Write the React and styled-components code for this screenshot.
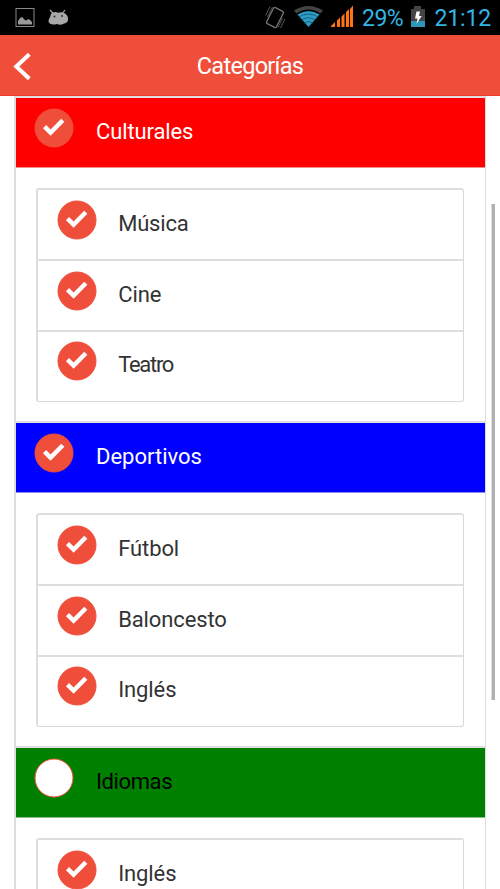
import React, { useState } from "react";
import styled, { createGlobalStyle } from "styled-components";

const GlobalStyle = createGlobalStyle`
  * {
    box-sizing: border-box;
  }

  body {
    margin: 0;
    background: #fff;
    font-family: Roboto, "Liberation Sans", sans-serif;
    overflow: hidden;
  }
`;

const Screen = styled.div`
  display: flex;
  flex-direction: column;
  width: 500px;
  height: 889px;
  overflow: hidden;
  background: #fff;
`;

const StatusBar = styled.div`
  display: flex;
  flex: none;
  justify-content: space-between;
  height: 35px;
  background: #000;
`;

const StatusGroup = styled.div`
  display: flex;
  align-items: flex-start;
`;

const StatusIcon = styled.svg`
  display: block;
  flex: none;
  height: 35px;
`;

const StatusText = styled.span`
  width: ${(props) => props.$width}px;
  color: #33b5e5;
  font-size: 23px;
  line-height: 37px;
  letter-spacing: ${(props) => props.$spacing}px;
  white-space: nowrap;
`;

const Header = styled.header`
  display: grid;
  flex: none;
  grid-template-columns: 60px 1fr 60px;
  align-items: center;
  height: 61px;
  background: #ef4e3a;
  border-bottom: 1px solid #ef3c26;
`;

const BackButton = styled.button`
  width: 60px;
  height: 60px;
  padding: 0;
  border: none;
  background: none;
  cursor: pointer;
`;

const Title = styled.h1`
  margin: 0;
  color: #fff;
  font-size: 23.5px;
  font-weight: 400;
  line-height: 60px;
  letter-spacing: -0.7px;
  text-align: center;
  padding-top: 1px;
`;

const Content = styled.main`
  display: flex;
  flex: 1;
  min-height: 0;
  justify-content: space-between;
  overflow: hidden;
`;

const Categories = styled.div`
  flex: none;
  width: 472px;
  margin-left: 14px;
`;

const Category = styled.section`
  height: 325px;
  border-left: 2px solid #dedede;
  border-right: 1px solid #dcdcdc;
`;

const CategoryHeader = styled.div`
  display: flex;
  height: 72px;
  padding: 10px 0 0 18px;
  border-top: 2px solid #e0dede;
  border-bottom: 1px solid ${(props) => props.$edge};
  background: ${(props) => props.$color};
  background-clip: padding-box;
  color: ${(props) => props.$text};
`;

const List = styled.div`
  height: 214px;
  margin: 20px 21px 19px 20px;
  border: 1px solid #d9d9d9;
  border-top: 2px solid #dedede;
  border-left: 2px solid #dedede;
  border-radius: 3px;
`;

const Item = styled.div`
  display: flex;
  height: ${(props) => props.$height}px;
  padding: 10px 0 0 18.6px;
  color: #333;

  & + & {
    padding-top: ${(props) => 12 - props.$line}px;
    border-top: ${(props) => props.$line}px solid #dedede;
  }

  & + & + & {
    padding-top: 9px;
  }
`;

const Label = styled.span`
  margin-left: 22px;
  font-size: 22px;
  line-height: 26px;
  padding-top: 11px;
  letter-spacing: ${(props) => props.$spacing || 0}px;

  ${Item} & {
    margin-left: 21.6px;
  }
`;

const CheckButton = styled.button`
  flex: none;
  width: 40px;
  height: 40px;
  padding: 0;
  border: none;
  background: none;
  cursor: pointer;
`;

const ScrollBar = styled.div`
  width: 4px;
  height: 496px;
  margin: 108px 5px 0 0;
  border-left: 1px solid #dcdcdc;
  background: #b0b0b0;
`;

const categories = [
  {
    name: "Culturales",
    spacing: -0.12,
    color: "#ff0000",
    edge: "#ef8b8b",
    checked: true,
    items: [
      { name: "Música", spacing: -0.2 },
      { name: "Cine", spacing: -0.1 },
      { name: "Teatro", spacing: -1.3 },
    ],
  },
  {
    name: "Deportivos",
    spacing: 0,
    color: "#0000ff",
    edge: "#8b8bef",
    checked: true,
    items: [
      { name: "Fútbol", spacing: -0.1 },
      { name: "Baloncesto", spacing: -0.12 },
      { name: "Inglés", spacing: -0.1 },
    ],
  },
  {
    name: "Idiomas",
    spacing: -0.4,
    color: "#008000",
    edge: "#8bb98b",
    checked: false,
    items: [{ name: "Inglés", spacing: -0.1 }],
  },
];

// each row has its own height and separator thickness
const rows = [
  { height: 69, line: 0 },
  { height: 71, line: 1 },
  { height: 71, line: 2 },
];

function Check({ initial, label }) {
  const [checked, setChecked] = useState(initial);

  return (
    <CheckButton
      type="button"
      aria-label={label}
      aria-pressed={checked}
      onClick={() => setChecked(!checked)}
    >
      <svg width="40" height="40" viewBox="0 0 40 40">
        <circle
          cx="20"
          cy="20"
          r="19"
          fill={checked ? "#ef4e3a" : "#fff"}
          stroke="#ef4e3a"
        />
        {checked && (
          <path
            d="M10.5 18.6 L16.6 24.6 L28.8 12.2"
            fill="none"
            stroke="#fff"
            strokeWidth="4.4"
          />
        )}
      </svg>
    </CheckButton>
  );
}

function StatusIcons() {
  return (
    <StatusBar>
      <StatusGroup>
        <StatusIcon width="80" viewBox="0 0 80 35">
          <rect x="16" y="8.5" width="18" height="18" fill="none" stroke="#8a8a8a" />
          <path
            d="M18 24.5V21l1.5-2 1-1.5 2-.2 1.5 2 2 1.3 2.5-1.5 2 1.2 1.5 2v2.2z"
            fill="#999"
          />
          <path
            d="M50 10l2.8 3M65 10l-2.3 3"
            stroke="#a8a8a8"
            strokeWidth="1.2"
          />
          <path
            d="M50.8 14.5c1.5-3 5.2-3 7.3-1.7 3-1.3 7-.4 8.5 2.3 3 3.5 1.5 8.4-3 8.6-2.5 1.5-5 1-6.7.2-3 1.1-7 1-8.3-1.8-.5-2.5 1.2-3.6 1.5-5z"
            fill="#a8a8a8"
          />
          <circle cx="54.5" cy="16.5" r=".9" fill="#222" />
          <circle cx="62" cy="16" r=".9" fill="#222" />
        </StatusIcon>
      </StatusGroup>
      <StatusGroup>
        <StatusIcon width="107" viewBox="255 0 107 35">
          <rect
            x="269.5"
            y="8.5"
            width="11"
            height="18"
            rx="1.5"
            fill="none"
            stroke="#777"
            strokeWidth="1.3"
            transform="rotate(27 275 17.5)"
          />
          <path
            d="M270 6.5l-4.5 9M272.5 7l-5 10M282.5 18l-4.5 9.5M285 19l-4.5 9"
            stroke="#555"
            strokeWidth="1"
          />
          <path
            d="M294 10.5Q308.5 1.5 323 10.5L320.5 13.5Q308.5 5.5 296.5 13.5Z"
            fill="#444"
          />
          <path d="M297.5 14.5Q308.5 7.5 319.5 14.5L308.5 27Z" fill="#2c9cc6" />
          <path
            d="M299 17Q308.5 11 318 17M301.5 20Q308.5 15.5 315.5 20M304 23Q308.5 20 313 23"
            fill="none"
            stroke="#145066"
            strokeWidth=".8"
          />
          <path
            d="M331 27v-1l4-4v5zM337 27v-6.5l3-3v9.5zM341.5 27v-10.5l3-3v13.5zM346 27v-15l3-3v18zM350 27v-18l3-3.5v21.5z"
            fill="#ff7315"
          />
        </StatusIcon>
        <StatusText $width={49} $spacing={-0.5}>
          29%
        </StatusText>
        <StatusIcon width="23.5" viewBox="411 0 23.5 35">
          <path d="M411 9h3V6h7v3h4v18h-14z" fill="#444" />
          <rect x="411" y="21" width="14" height="6" fill="#3096b8" />
          <path
            d="M416.5 11.5h3.5l-1 4.5h2.7l-5.2 8 1-5.5h-2.5z"
            fill="#fff"
          />
        </StatusIcon>
        <StatusText $width={65.5} $spacing={-0.15}>
          21:12
        </StatusText>
      </StatusGroup>
    </StatusBar>
  );
}

export default function App() {
  return (
    <Screen>
      <GlobalStyle />
      <StatusIcons />
      <Header>
        <BackButton type="button" aria-label="Atrás">
          <svg width="60" height="60" viewBox="0 0 60 60">
            <path
              d="M29.3 18.3L16.3 30.5L29.3 42.8"
              fill="none"
              stroke="#fff"
              strokeWidth="4"
            />
          </svg>
        </BackButton>
        <Title>Categorías</Title>
      </Header>
      <Content>
        <Categories>
          {categories.map((category) => (
            <Category key={category.name}>
              <CategoryHeader
                $color={category.color}
                $edge={category.edge}
                $text={category.checked ? "#fff" : "#000"}
              >
                <Check initial={category.checked} label={category.name} />
                <Label $spacing={category.spacing}>{category.name}</Label>
              </CategoryHeader>
              <List>
                {category.items.map((item, i) => (
                  <Item
                    key={item.name}
                    $height={rows[i].height}
                    $line={rows[i].line}
                  >
                    <Check initial={true} label={item.name} />
                    <Label $spacing={item.spacing}>{item.name}</Label>
                  </Item>
                ))}
              </List>
            </Category>
          ))}
        </Categories>
        <ScrollBar />
      </Content>
    </Screen>
  );
}
